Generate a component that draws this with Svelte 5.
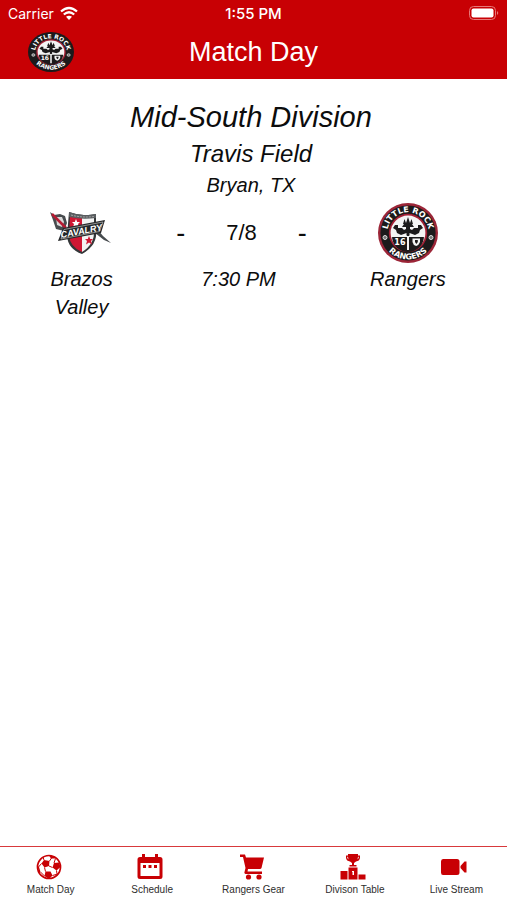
<script>
  const tabs = [
    { id: 'match', label: 'Match Day' },
    { id: 'schedule', label: 'Schedule' },
    { id: 'gear', label: 'Rangers Gear' },
    { id: 'table', label: 'Divison Table' },
    { id: 'stream', label: 'Live Stream' }
  ];
</script>

{#snippet crest(id, rx, ry, size, rim)}
  {@const tx = rx * 0.69}
  {@const ty = ry * 0.69}
  {@const bx = rx * 0.88}
  {@const by = ry * 0.88}
  <svg class="crest" width={rx * 2} height={ry * 2} viewBox="{-rx} {-ry} {rx * 2} {ry * 2}" role="img" aria-label="Little Rock Rangers crest">
    <ellipse {rx} {ry} fill={rim} />
    <ellipse rx={rx * 0.92} ry={ry * 0.92} fill="#1c1a1b" />
    <ellipse rx={rx * 0.64} ry={ry * 0.64} fill="#a32035" />
    <ellipse rx={rx * 0.58} ry={ry * 0.58} fill="#f4f4f4" />
    <g transform="scale({rx / 30} {ry / 30})">
      <path d="M-16 3H16A16 16 0 0 1-16 3Z" fill="#1c1a1b" />
      <path d="M-1.500 16V0L-7 2-11 0-12-3-15-5-13-8-10-8-10-5-6-5-4-3-2-4V-6H-6L-4-9H-5L-3.500-14-2-10 0-16 2-10 3.500-14 5-9H4L6-6H2V-4L4-3 6-5 10-5 10-8 13-8 15-5 12-3 11 0 7 2 1.500 0V16Z" fill="#1c1a1b" />
      <path d="M-1 3H1V17H-1ZM-17 2.500H-1V4H-17ZM1 2.500H17V4H1Z" fill="#f4f4f4" />
      <path d="M4.500 5.500H12V9Q11 12 8.200 13 5 12 4.500 9Z" fill="#f4f4f4" />
      <path d="M7 7H9.800V9L8.400 11 7 9Z" fill="#1c1a1b" />
      <circle cx="-23" cy="4.500" r="2" fill="#777" stroke="#ddd" stroke-width="1" />
      <circle cx="23" cy="4.500" r="2" fill="#777" stroke="#ddd" stroke-width="1" />
    </g>
    <path id="{id}-top" d="M{-tx} 0A{tx} {ty} 0 0 1 {tx} 0" fill="none" />
    <path id="{id}-bottom" d="M{-bx} 0A{bx} {by} 0 0 0 {bx} 0" fill="none" />
    <g class="crest-text" font-size={size}>
      <text><textPath href="#{id}-top" startOffset="50%" text-anchor="middle">LITTLE ROCK</textPath></text>
      <text><textPath href="#{id}-bottom" startOffset="50%" text-anchor="middle">RANGERS</textPath></text>
      <text x={-rx * 0.27} y={ry * 0.4} text-anchor="middle">16</text>
    </g>
  </svg>
{/snippet}

{#snippet icon(name)}
  <svg class="tab-icon" viewBox="0 0 26 26" aria-hidden="true">
    {#if name === 'match'}
      <circle cx="13" cy="13" r="11.500" fill="#fff" stroke="#c80004" stroke-width="1.700" />
      <path d="M8 6 13.500 7 13 12 8.500 13.500 5.500 9.500ZM18 9 23 8.500 24.500 13 20.500 16.500 16.500 13.500ZM9.500 17.500 14.500 17.500 16.500 21.500 13 25 8.500 22ZM13 1.500 19 2.500 19.500 4.500 15 4.500ZM1.500 12 3 13 4.500 18 3 19ZM19.500 23 20 20.500 23.500 18Z" fill="#c80004" />
      <path d="M13.500 7 15.500 4M13 12 16.500 13.500M8.500 13.500 9.500 17.500M5.500 9.500 2.500 13M8 6 7 3M18 9 19.500 4.500M8.500 22 4.500 18M16.500 21.500 20 20.500M20.500 16.500 21 20" stroke="#c80004" stroke-width="1" />
    {:else if name === 'schedule'}
      <path fill="#c80004" fill-rule="evenodd" d="M5 0H8V3H18V0H21V3H23Q25.500 3 25.500 5.500V22.500Q25.500 25 23 25H3Q.5 25 .5 22.500V5.500Q.5 3 3 3H5ZM3.500 9V22H22.500V9ZM6 11H9V14H6ZM11.500 11H14.500V14H11.500ZM17 11H20V14H17Z" />
    {:else if name === 'gear'}
      <g fill="#c80004">
        <path d="M1 .5H6L7 3.500H25L22.500 14Q22 15 21 15H9L8.500 17.500H23V20H6.500Q5 19.500 5.500 18L6.500 14 4 3H1Z" />
        <circle cx="9.500" cy="23" r="2.600" /><circle cx="20" cy="23" r="2.600" />
      </g>
    {:else if name === 'table'}
      <path fill="#c80004" fill-rule="evenodd" d="M8 0H18V1.500H20V4Q19.500 7 16 7.500L14 9V11H16.500V12.500H9.500V11H12V9L10 7.500Q6.500 7 6 4V1.500H8ZM7.300 2.700V4L8.500 5.500 8 2.700ZM18.700 2.700V4L17.500 5.500 18 2.700ZM8.500 13.500H17.500V25.500H8.500ZM12 17V18H12.500V21H14V17ZM.5 17H7.500V25.500H.5ZM18.500 20.500H25.500V25.500H18.500Z" />
    {:else}
      <path fill="#c80004" d="M2 5H16Q18.500 5 18.500 7.500V18.500Q18.500 21 16 21H2Q0 21 0 18.500V7.500Q0 5 2 5ZM19.500 12 23.500 7.500H25.500V18.500H23.500L19.500 14Z" />
    {/if}
  </svg>
{/snippet}

<div class="screen">
  <header>
    <div class="status">
      <span class="carrier">Carrier
        <svg width="18" height="14" viewBox="0 0 18 14" aria-hidden="true">
          <path d="M1 5.500Q9-1.500 17 5.500M3.800 8.500Q9 4 14.200 8.500" fill="none" stroke="#fff" stroke-width="2.300" />
          <path d="M6 10.800Q9 8.500 12 10.800L9 14Z" fill="#fff" />
        </svg>
      </span>
      <span class="clock">1:55 PM</span>
      <span class="battery">
        <svg width="30" height="14" viewBox="0 0 30 14" role="img" aria-label="Battery full">
          <rect x=".5" y=".5" width="26" height="13" rx="4" fill="none" stroke="#e67878" />
          <rect x="2.500" y="2.500" width="22" height="9" rx="2" fill="#fff" />
          <path d="M28 5Q30.500 7 28 9Z" fill="#e67878" />
        </svg>
      </span>
    </div>
    <div class="bar">
      <div class="brand">{@render crest('nav', 23, 20, 6, '#1c1a1b')}</div>
      <h1>Match Day</h1>
      <div></div>
    </div>
  </header>

  <main>
    <h2>Mid-South Division</h2>
    <p class="venue">Travis Field</p>
    <p class="city">Bryan, TX</p>
    <div class="fixture">
      <svg class="cavalry" width="75" height="65" viewBox="0 0 75 65" role="img" aria-label="Brazos Valley Cavalry logo">
        <path d="M25 12Q38 17 52 14V30Q54 45 38 54 24 49 23 36Z" fill="#343739" />
        <path d="M26 17H38V52Q26 47 25 35Z" fill="#cf1733" />
        <path d="M38 17H50V30Q51 44 38 52Z" fill="#f3f3f3" />
        <path d="M25 12Q38 17 52 14V18Q38 20 25 17Z" fill="#5a5e61" />
        <path d="M27 15Q38 18 50 16.500" stroke="#aaa" stroke-width="1" stroke-dasharray="2 1" fill="none" />
        <path d="M32 19 33.200 22H36L34 24 35 27.500 32 25.500 29 27.500 30 24 28 22H30.800Z" fill="#fff" />
        <path d="M45 36 46.200 39H49L47 41 48 44.500 45 42.500 42 44.500 43 41 41 39H43.800Z" fill="#cf1733" />
        <path d="M6 12 10 15 16 14 21 16 23 23 20 31 12 29 9 20Z" fill="#474b4e" />
        <path d="M12 17H18L20 22 18 27 13 25Z" fill="#d9d9d9" />
        <path d="M8 14 14 20 22 28" stroke="#b51c33" stroke-width="2.500" fill="none" />
        <path d="M54 30 59 36 67 43 60 40 51 33Z" fill="#474b4e" />
        <path d="M19 28 61 20 57 33 14 41Z" fill="#252729" />
        <path d="M20 29.500 59 22 55.500 31.500 17 39Z" fill="none" stroke="#bbb" stroke-width=".7" />
        <path id="cavalry-line" d="M17 38 59 30" fill="none" />
        <text class="cavalry-text"><textPath href="#cavalry-line" startOffset="50%" text-anchor="middle">CAVALRY</textPath></text>
      </svg>
      <div class="when"><span class="dash">-</span><span>7/8</span><span class="dash">-</span></div>
      {@render crest('team', 30, 30, 8, '#9c2638')}
      <span class="name">Brazos Valley</span>
      <span>7:30 PM</span>
      <span>Rangers</span>
    </div>
  </main>

  <nav aria-label="Main">
    {#each tabs as tab}
      <a href="#{tab.id}" aria-current={tab.id === 'match' ? 'page' : undefined}>
        {@render icon(tab.id)}
        <span>{tab.label}</span>
      </a>
    {/each}
  </nav>
</div>

<style>
  :global(body) {
    margin: 0;
    background: #fff;
  }
  .screen {
    min-height: 100vh;
    display: flex;
    flex-direction: column;
    font-family: 'Liberation Sans', Arial, sans-serif;
    color: #0c0c0c;
  }
  header {
    background: #c80004;
    color: #fff;
    padding-bottom: 1px;
  }
  .status {
    display: grid;
    grid-template-columns: 1fr auto 1fr;
    align-items: center;
    height: 26px;
    padding: 0 8px;
    font-family: Inter, sans-serif;
    font-size: 14px;
  }
  .carrier {
    display: flex;
    align-items: center;
    gap: 6px;
  }
  .clock {
    font-size: 15px;
    font-weight: 500;
  }
  .battery {
    display: flex;
    justify-content: flex-end;
  }
  .bar {
    display: grid;
    grid-template-columns: 1fr auto 1fr;
    align-items: center;
    height: 52px;
  }
  .brand {
    padding-left: 28px;
  }
  h1 {
    margin: 0;
    font-size: 27px;
    font-weight: 400;
    line-height: 52px;
  }
  .crest {
    display: block;
  }
  .crest-text {
    fill: #fff;
    font-family: 'DejaVu Sans', sans-serif;
    font-style: normal;
    font-weight: 700;
  }
  main {
    flex: 1;
    padding-top: 17px;
    padding-right: 5px;
    text-align: center;
    font-style: italic;
  }
  h2 {
    margin: 0;
    font-size: 29px;
    font-weight: 400;
    line-height: 42px;
  }
  p {
    margin: 0;
  }
  .venue {
    font-size: 24px;
    line-height: 32px;
  }
  .city {
    font-size: 20px;
    line-height: 30px;
  }
  .fixture {
    display: grid;
    grid-template-columns: 13fr 12fr 15fr;
    justify-items: center;
    align-items: start;
    font-size: 20px;
    line-height: 28px;
  }
  .fixture > .crest {
    align-self: center;
  }
  .when {
    box-sizing: border-box;
    width: 100%;
    display: flex;
    justify-content: space-between;
    align-items: center;
    align-self: center;
    padding-left: 13px;
    padding-right: 7px;
    font-size: 22px;
    font-style: normal;
  }
  .dash {
    font-size: 27px;
  }
  .name {
    width: 80px;
  }
  .cavalry-text {
    fill: #fff;
    font-size: 9px;
    font-weight: 700;
  }
  nav {
    display: flex;
    box-sizing: border-box;
    height: 54px;
    border-top: 1px solid #d8393c;
  }
  nav a {
    flex: 1;
    display: flex;
    flex-direction: column;
    align-items: center;
    padding-top: 7px;
    color: #2e2e2e;
    text-decoration: none;
    font-size: 10px;
    line-height: 20px;
  }
  .tab-icon {
    width: 26px;
    height: 26px;
    margin-right: 4px;
  }
</style>
